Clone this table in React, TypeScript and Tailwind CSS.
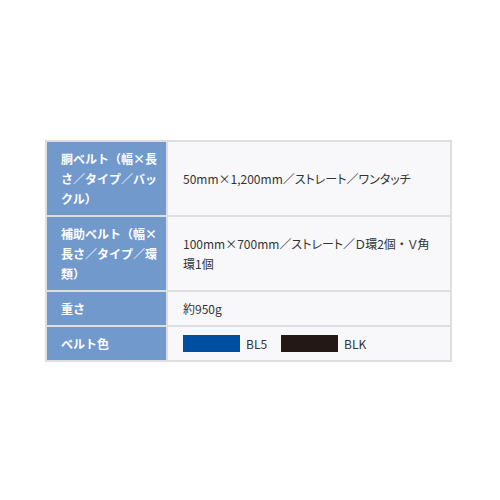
import React from 'react';

interface SpecRow {
  label: string;
  value: React.ReactNode;
}

const Swatch = ({ color, name }: { color: string; name: string }) => (
  <span className="inline-flex items-center gap-[6px]">
    <span className={`inline-block w-[57px] h-[17px] ${color}`} />
    <span>{name}</span>
  </span>
);

const rows: SpecRow[] = [
  { label: '胴ベルト（幅×長さ／タイプ／バックル）', value: '50mm×1,200mm／ストレート／ワンタッチ' },
  {
    label: '補助ベルト（幅×長さ／タイプ／環類）',
    value: (
      <>
        100mm×700mm／ストレート／Ｄ環2個<span className="[font-feature-settings:normal]">・</span>Ｖ角環1個
      </>
    ),
  },
  { label: '重さ', value: '約950g' },
  {
    label: 'ベルト色',
    value: (
      <div className="flex items-center gap-[14px]">
        <Swatch color="bg-[#004ea2]" name="BL5" />
        <Swatch color="bg-[#231815]" name="BLK" />
      </div>
    ),
  },
];

export default function App() {
  return (
    <div
      className="w-[500px] h-[500px] bg-white pt-[140px] pl-[45px]"
      style={{ fontFamily: '"Noto Sans CJK JP", "Noto Sans", sans-serif' }}
    >
      <table className="w-[407px] border-collapse border-2 border-[#dedede] text-[12px] leading-[20px]">
        <tbody>
          {rows.map((row) => (
            <tr key={row.label}>
              <th className="w-[121px] bg-[#7199cc] text-white font-bold text-left align-middle border-2 border-[#dedede] pl-[14px] pr-[8px] py-[6.5px]">
                {row.label}
              </th>
              <td className="bg-[#f8f8fa] text-[#333333] align-middle border-2 border-[#dedede] px-[15px] py-[6.5px] [font-feature-settings:'palt']">
                {row.value}
              </td>
            </tr>
          ))}
        </tbody>
      </table>
    </div>
  );
}
